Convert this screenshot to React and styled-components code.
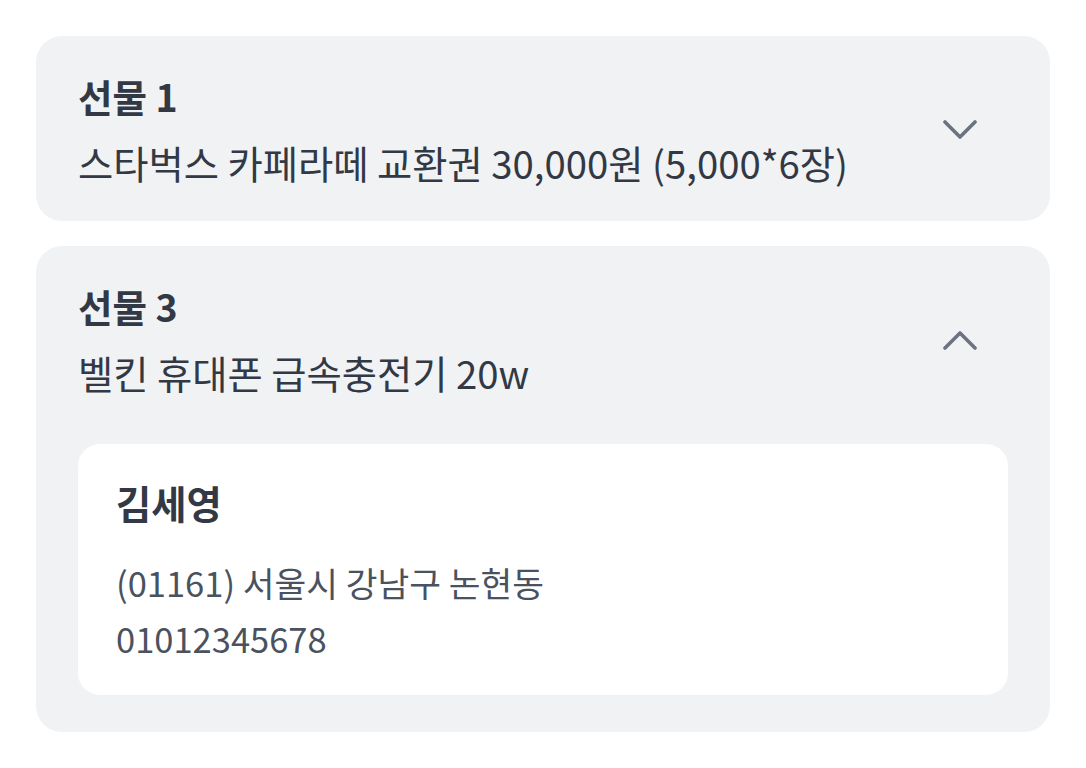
import React, { useState } from "react"
import styled, { createGlobalStyle } from "styled-components"

const GlobalStyle = createGlobalStyle`
  body {
    margin: 0;
    background: #ffffff;
    font-family: "Noto Sans CJK KR", "Noto Sans", sans-serif;
    -webkit-font-smoothing: antialiased;
  }
`

const Page = styled.div`
  display: flex;
  flex-direction: column;
  gap: 25px;
  padding: 36px 36px 0 36px;
`

const Card = styled.div`
  background: #f1f2f4;
  border-radius: 26px;
  padding: 36px 42px ${(p) => (p.open ? "37px" : "34px")} 42px;
`

const Header = styled.div`
  display: flex;
  align-items: center;
  justify-content: space-between;
  cursor: pointer;
`

const Texts = styled.div`
  display: flex;
  flex-direction: column;
  gap: 19px;
`

const Title = styled.div`
  font-size: 37.5px;
  line-height: 48px;
  font-weight: 700;
  color: #323945;
`

const Subtitle = styled.div`
  font-size: 38.3px;
  line-height: 48px;
  font-weight: 400;
  color: #323945;
`

const Chevron = styled.svg`
  width: 34px;
  height: 20px;
  margin-right: 31px;
  margin-top: 0;
  flex-shrink: 0;
`

const Detail = styled.div`
  margin-top: 47px;
  background: #ffffff;
  border-radius: 22px;
  padding: 32px 38px 29px 38px;
`

const Name = styled.div`
  font-size: 38.3px;
  line-height: 54px;
  font-weight: 700;
  color: #323945;
  margin-bottom: 24px;
`

const Line = styled.div`
  font-size: 34.5px;
  line-height: 56px;
  color: #4a5260;
`

function Arrow({ up }) {
  return (
    <Chevron viewBox="0 0 34 20" fill="none">
      <polyline
        points={up ? "2,18 17,3 32,18" : "2,2 17,17 32,2"}
        stroke="#6b7280"
        strokeWidth="3.6"
        strokeLinecap="round"
        strokeLinejoin="round"
      />
    </Chevron>
  )
}

const gifts = [
  {
    id: 1,
    title: "선물 1",
    desc: "스타벅스 카페라떼 교환권 30,000원 (5,000*6장)",
  },
  {
    id: 3,
    title: "선물 3",
    desc: "벨킨 휴대폰 급속충전기 20w",
    recipient: {
      name: "김세영",
      address: "(01161) 서울시 강남구 논현동",
      phone: "01012345678",
    },
  },
]

export default function App() {
  const [openId, setOpenId] = useState(3)

  return (
    <>
      <GlobalStyle />
      <Page>
        {gifts.map((g) => {
          const open = openId === g.id
          return (
            <Card key={g.id} open={open}>
              <Header onClick={() => setOpenId(open ? null : g.id)}>
                <Texts>
                  <Title>{g.title}</Title>
                  <Subtitle>{g.desc}</Subtitle>
                </Texts>
                <Arrow up={open} />
              </Header>
              {open && g.recipient && (
                <Detail>
                  <Name>{g.recipient.name}</Name>
                  <Line>{g.recipient.address}</Line>
                  <Line>{g.recipient.phone}</Line>
                </Detail>
              )}
            </Card>
          )
        })}
      </Page>
    </>
  )
}
